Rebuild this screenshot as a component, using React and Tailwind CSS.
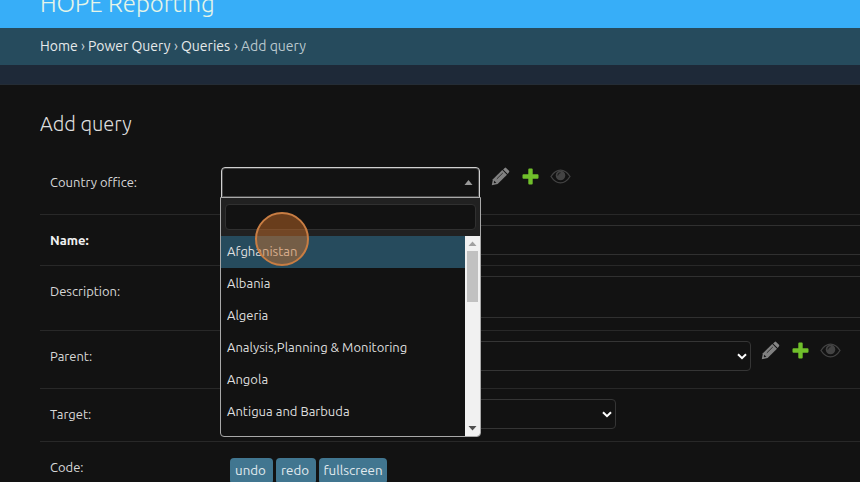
function Pencil() {
  return (
    <svg className="h-[19px] w-[19px] shrink-0" viewBox="0 0 19 19">
      <path d="M.8 18.200 L1.900 12.300 L11.300 3.100 L16 7.800 L6.600 17.100 Z" fill="#808080" />
      <path d="M12.100 2.400 L13.700.9 Q14.400.3 15.100.9 L18 3.800 Q18.600 4.500 18 5.200 L16.700 7 Z" fill="#858585" />
      <path d="M3.200 13.700 L5.300 15.800 L3.500 16.200 L2.800 15.500 Z" fill="#171717" />
      <path d="M5.800 11.900 L11.800 6" stroke="#303030" strokeWidth="1" />
    </svg>
  );
}

function Plus() {
  return (
    <svg className="h-[17px] w-[17px] shrink-0" viewBox="0 0 17 17">
      <path d="M7.300 .5 H9.700 Q10.700 .5 10.700 1.500 V6.300 H15.500 Q16.500 6.300 16.500 7.300 V9.700 Q16.500 10.700 15.500 10.700 H10.700 V15.500 Q10.700 16.500 9.700 16.500 H7.300 Q6.300 16.500 6.300 15.500 V10.700 H1.500 Q.5 10.700 .5 9.700 V7.300 Q.5 6.300 1.500 6.300 H6.300 V1.500 Q6.300 .5 7.300 .5Z" fill="#70bf2b" />
    </svg>
  );
}

function Eye() {
  return (
    <svg className="h-[15px] w-[21px] shrink-0" viewBox="0 0 21 15">
      <path d="M1 7.500 Q5 1.200 10.500 1.200 T20 7.500 Q16 13.800 10.500 13.800 T1 7.500Z" fill="none" stroke="#434343" strokeWidth="1.300" />
      <circle cx="10.500" cy="6.500" r="4.800" fill="#434343" />
      <path d="M7.800 6.500 Q7.800 3.700 10.500 3.700" fill="none" stroke="#171717" strokeWidth="1" />
    </svg>
  );
}

function RelatedIcons({ className }) {
  return (
    <div className={"flex items-start " + className}>
      <Pencil />
      <div className="ml-3 mt-px"><Plus /></div>
      <div className="ml-[11px] mt-[2px]"><Eye /></div>
    </div>
  );
}

function Chevron() {
  return (
    <svg className="h-[7px] w-[10px]" viewBox="0 0 10 7">
      <path d="M1 1.200 L5 5.200 L9 1.200" fill="none" stroke="#fff" strokeWidth="2" />
    </svg>
  );
}

function Row({ label, labelClass, className, children }) {
  return (
    <div className={"ml-10 flex border-b border-[#282828] pl-[10px] pt-[10px] " + className}>
      <div className="w-[171px] shrink-0 pt-[5px] leading-5">
        <span className={labelClass}>{label}</span>
      </div>
      {children}
    </div>
  );
}

const options = [
  "Afghanistan",
  "Albania",
  "Algeria",
  "Analysis,Planning & Monitoring",
  "Angola",
  "Antigua and Barbuda",
];

function Dropdown() {
  return (
    <div className="absolute -left-px top-[30px] z-10 h-[240px] w-[261px] overflow-hidden rounded-b-[4px] border border-[#a8a8a8] bg-[#121212]">
      <div className="h-[38px] bg-[#212121] px-[4px] pt-[6px]">
        <div className="h-[26px] rounded-[4px] border border-[#303030] bg-[#121212]" />
      </div>
      <div className="flex h-[200px]">
        <div className="flex-1 text-[#dedede]">
          {options.map((name, i) => (
            <div key={name} className={"h-8 pl-[6px] leading-[31px] " + (i === 0 ? "bg-[#264b5d]" : "")}>
              {name}
            </div>
          ))}
        </div>
        <div className="flex w-[15px] flex-col items-center bg-[#f1f1f1]">
          <svg className="h-[15px] w-[9px] shrink-0" viewBox="0 0 9 15"><path d="M.5 10 L4.500 5.500 L8.500 10Z" fill="#a0a0a0" /></svg>
          <div className="h-[51px] w-[11px] bg-[#c1c1c1]" />
          <svg className="mt-auto h-[15px] w-[9px]" viewBox="0 0 9 15"><path d="M.5 5 L4.500 9.500 L8.500 5Z" fill="#505050" /></svg>
        </div>
      </div>
      <div className="absolute left-[34px] top-[14px] h-[54px] w-[54px] rounded-full border-2 border-[#c87d43] bg-[#d4742b]/45" />
    </div>
  );
}

export default function App() {
  return (
    <div className="h-[482px] w-[860px] overflow-hidden bg-[#121212] font-['Ubuntu','Noto_Sans',sans-serif] text-[13px] text-[#d8d8d8]">
      <header className="flex h-[28px] items-end bg-[#37aef8] pb-2 pl-10">
        <h2 className="shrink-0 text-[24px] font-light leading-8 text-[#e5f5e8]">HOPE Reporting</h2>
      </header>
      <nav className="flex h-[37px] items-center bg-[#264b5d] pl-10 text-[14px] text-[#e6eaeb]">
        <span className="w-[41px]">Home</span>
        <span className="w-[7px] text-[#c4d0d5]">›</span>
        <span className="w-[86px]">Power Query</span>
        <span className="w-[7px] text-[#c4d0d5]">›</span>
        <span className="w-[53px]">Queries</span>
        <span className="w-[7px] text-[#c4d0d5]">›</span>
        <span className="text-[#bac8ce]">Add query</span>
      </nav>
      <div className="h-5 border-b border-[#242c35] bg-[#1e2938]" />
      <main className="pt-[23px]">
        <h1 className="pl-10 text-[20px] font-light leading-8 text-[#dedede]">Add query</h1>
        <div className="pt-[17px]">
          <Row label="Country office:" labelClass="" className="h-[58px]">
            <div className="relative h-[31px] w-[259px] shrink-0">
              <div className="flex h-[31px] items-center justify-end rounded-t-[4px] border border-[#d0d0d0] bg-[#121212] pr-[6px] shadow-[inset_0_0_0_1px_#484848]">
                <svg className="h-[5px] w-[9px]" viewBox="0 0 9 5"><path d="M.5 5 L4.500 0 L8.500 5Z" fill="#999" /></svg>
              </div>
              <Dropdown />
            </div>
            <RelatedIcons className="ml-[11px]" />
          </Row>
          <Row label="Name:" labelClass="font-bold text-[#f0f0f0]" className="h-[51px]">
            <div className="h-[30px] flex-1 border-y border-[#303030]" />
          </Row>
          <Row label="Description:" labelClass="" className="h-[65px]">
            <div className="h-[42px] flex-1 border-y border-[#303030]" />
          </Row>
          <Row label="Parent:" labelClass="" className="h-[58px]">
            <div className="flex h-[30px] w-[530px] items-center justify-end rounded-[4px] border border-[#353535] pr-[3px]"><Chevron /></div>
            <RelatedIcons className="ml-[10px]" />
          </Row>
          <Row label="Target:" labelClass="" className="h-[53px]">
            <div className="flex h-[30px] w-[395px] items-center justify-end rounded-[4px] border border-[#353535] pr-[3px]"><Chevron /></div>
          </Row>
          <Row label="Code:" labelClass="" className="h-[60px]">
            <div className="ml-[9px] mt-[6px] flex gap-[3px] text-[13.333px] text-[#e2ebef]">
              <button className="h-[26px] w-[43px] rounded-[4px] bg-[#417690] pr-[2px]">undo</button>
              <button className="h-[26px] w-[40px] rounded-[4px] bg-[#417690] pr-[2px]">redo</button>
              <button className="h-[26px] w-[68px] rounded-[4px] bg-[#417690]">fullscreen</button>
            </div>
          </Row>
        </div>
      </main>
    </div>
  );
}
